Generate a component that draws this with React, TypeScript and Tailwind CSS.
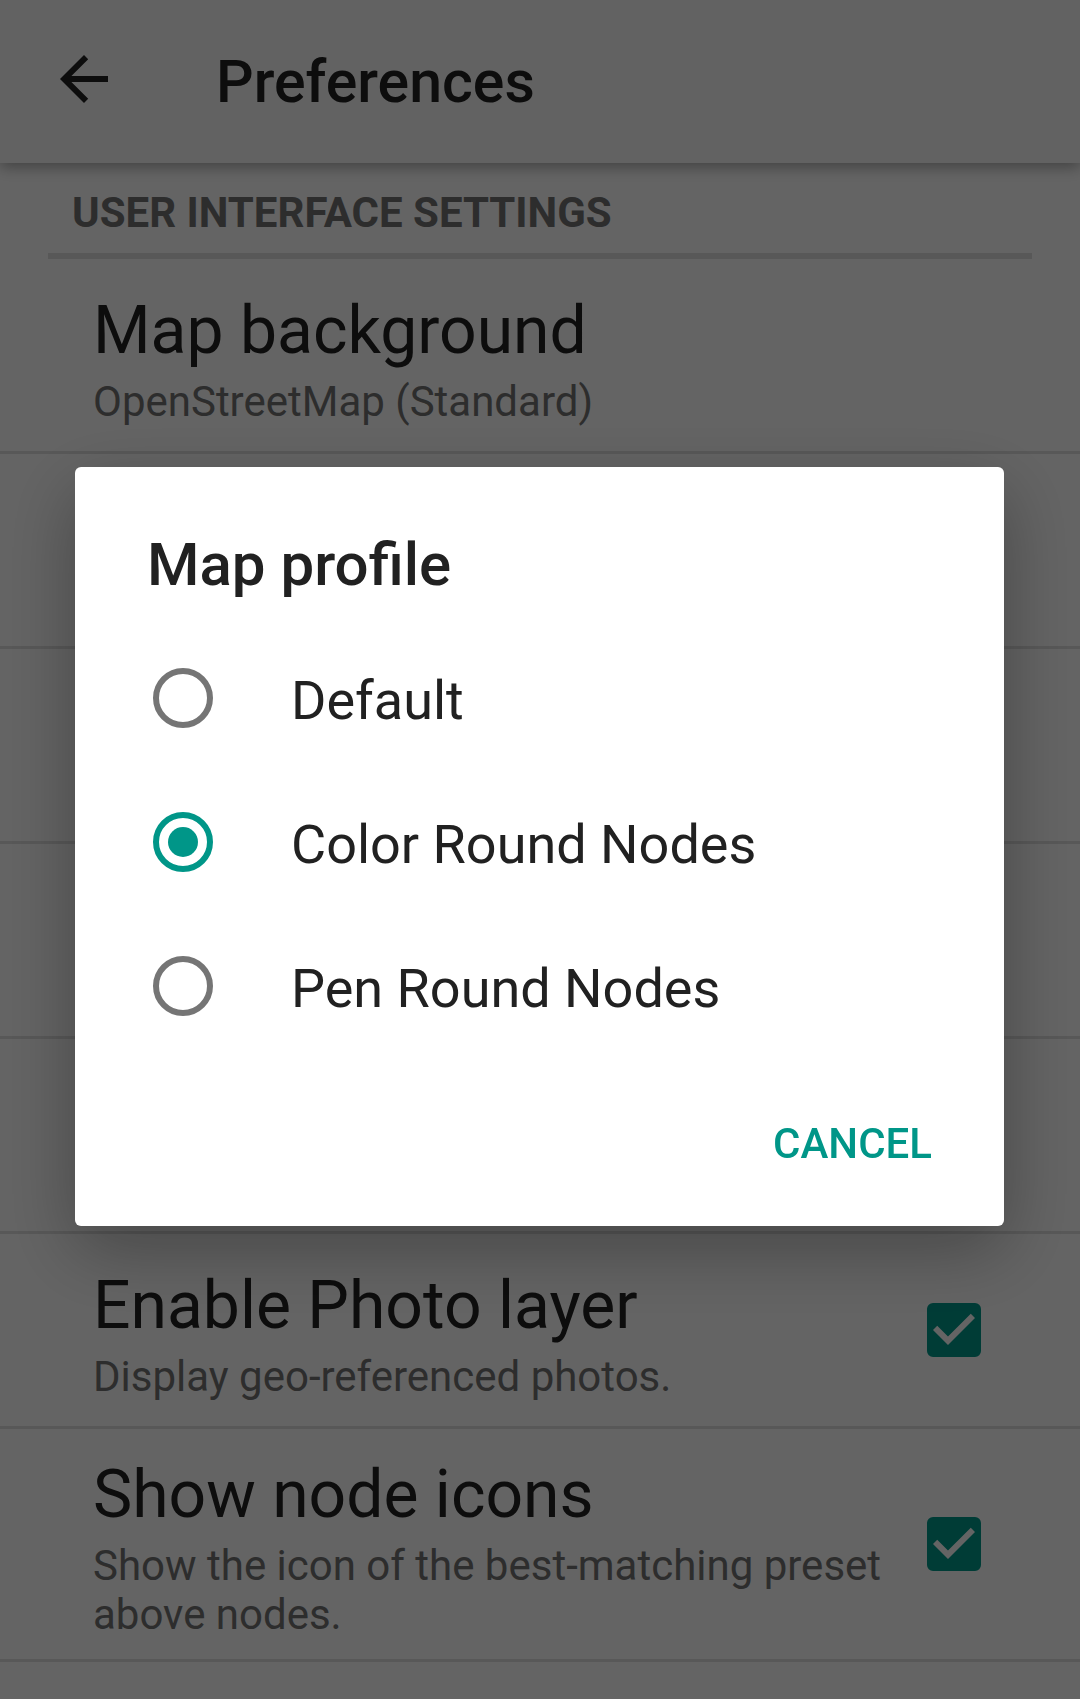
import { useState } from "react";

type Preference = {
  id: string;
  title?: string;
  summary?: string;
  checkable?: boolean;
};

const preferences: Preference[] = [
  { id: "background", title: "Map background", summary: "OpenStreetMap (Standard)" },
  { id: "row-2" },
  { id: "row-3" },
  { id: "row-4" },
  { id: "row-5" },
  {
    id: "photo-layer",
    title: "Enable Photo layer",
    summary: "Display geo-referenced photos.",
    checkable: true,
  },
  {
    id: "node-icons",
    title: "Show node icons",
    summary: "Show the icon of the best-matching preset above nodes.",
    checkable: true,
  },
];

const profiles = ["Default", "Color Round Nodes", "Pen Round Nodes"];

function BackIcon() {
  return (
    <svg viewBox="0 0 24 24" className="size-[72px]" fill="currentColor" aria-hidden="true">
      <path d="M20 11H7.8l5.6-5.6L12 4l-8 8 8 8 1.4-1.4L7.8 13H20v-2z" />
    </svg>
  );
}

function CheckBox({ id }: { id: string }) {
  return (
    <span className="relative mr-[99px] size-[54px] shrink-0">
      <input
        id={id}
        type="checkbox"
        defaultChecked
        className="peer block size-[54px] appearance-none rounded-md border-6 border-[#757575] checked:border-[#009688] checked:bg-[#009688]"
      />
      <svg
        viewBox="3 3 18 18"
        className="pointer-events-none absolute inset-0 hidden size-[54px] text-[#fafafa] peer-checked:block"
        fill="currentColor"
        aria-hidden="true"
      >
        <path d="M10 17l-5-5 1.41-1.41L10 14.17l7.59-7.59L19 8z" />
      </svg>
    </span>
  );
}

function PreferenceRow({ id, title, summary, checkable }: Preference) {
  return (
    <li className="border-b-3 border-[#dcdcdc]">
      <label htmlFor={checkable ? id : undefined} className="flex min-h-[192px] items-center pt-5 pb-[21px] pl-[93px]">
        <span className="flex min-w-0 flex-1 flex-col gap-2 pt-[7px] pr-10">
          <span className="text-[66px] leading-[77px]">{title}</span>
          <span className="-mb-px text-[42px] leading-[49px] text-[#717171]">{summary}</span>
        </span>
        {checkable && <CheckBox id={id} />}
      </label>
    </li>
  );
}

function ProfileDialog() {
  const [selected, setSelected] = useState("Color Round Nodes");
  return (
    <div className="fixed inset-0 flex items-center bg-black/60 pr-[76px] pb-[6px] pl-[75px]">
      <div
        role="dialog"
        aria-modal="true"
        aria-labelledby="dialog-title"
        className="w-full rounded-md bg-white shadow-[0_24px_72px_rgba(0,0,0,0.3)]"
      >
        <h2 id="dialog-title" className="px-[72px] pt-[63px] text-[60px] leading-[70px] font-medium">
          Map profile
        </h2>
        <fieldset className="pt-[26px]">
          {profiles.map((profile) => (
            <label key={profile} className="flex h-[144px] items-center gap-[78px] pl-[78px]">
              <input
                type="radio"
                name="profile"
                checked={selected === profile}
                onChange={() => setSelected(profile)}
                className="grid size-[60px] shrink-0 appearance-none place-content-center rounded-full border-6 border-[#757575] before:size-[30px] before:rounded-full checked:border-[#009688] checked:before:bg-[#009688]"
              />
              <span className="pt-[6px] text-[54px] leading-[64px]">{profile}</span>
            </label>
          ))}
        </fieldset>
        <div className="flex justify-end pt-[19px] pr-[48px] pb-[17px]">
          <button type="button" className="h-[132px] px-6 text-[42px] font-medium text-[#009688]">
            CANCEL
          </button>
        </div>
      </div>
    </div>
  );
}

export default function App() {
  return (
    <div className="min-h-screen overflow-hidden bg-[#fafafa] font-[Roboto,sans-serif] text-[#212121]">
      <header className="relative flex h-[163px] items-center gap-24 bg-[#f5f5f5] pl-12 shadow-[0_4px_14px_rgba(0,0,0,0.35)]">
        <button type="button" aria-label="Back" className="mb-[6px]">
          <BackIcon />
        </button>
        <h1 className="text-[59px] leading-[70px] font-medium">Preferences</h1>
      </header>
      <main>
        <h2 className="mx-12 border-b-6 border-[#dcdcdc] pt-[25px] pb-4 pl-6 text-[42px] leading-[49px] font-bold text-[#717171]">
          USER INTERFACE SETTINGS
        </h2>
        <ul>
          {preferences.map((preference) => (
            <PreferenceRow key={preference.id} {...preference} />
          ))}
        </ul>
      </main>
      <ProfileDialog />
    </div>
  );
}
